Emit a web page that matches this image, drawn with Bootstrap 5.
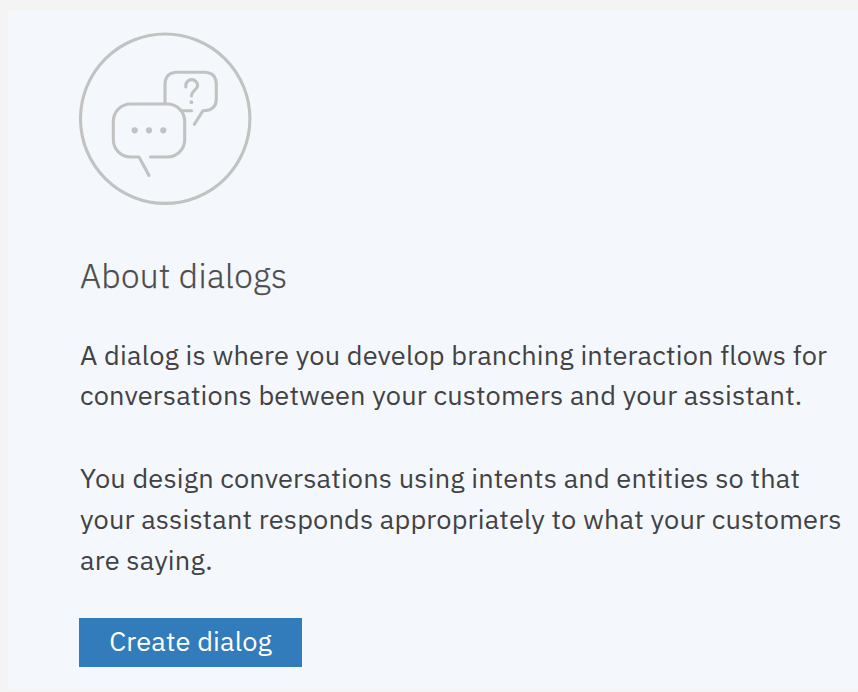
<!DOCTYPE html>
<html lang="en">
<head>
<meta charset="utf-8">
<meta name="viewport" content="width=device-width, initial-scale=1">
<title>About dialogs</title>
<link href="https://cdn.jsdelivr.net/npm/bootstrap@5.3.0/dist/css/bootstrap.min.css" rel="stylesheet">
<style>
body{background:#f4f4f4;font-family:"IBM Plex Sans","Open Sans",sans-serif;color:#424244;height:692px;overflow:hidden;padding:11px 0 3px 8px}
.panel{background:#f4f7fc;padding:21px 0 0 71px}
.dialog-icon{width:174px;height:174px}
.title{font-size:33.6px;line-height:44px;font-weight:300;margin:48px 0 0 1px;color:#4c4c4c;letter-spacing:.33px;-webkit-text-stroke:.25px #4c4c4c}
.copy{font-size:27.2px;white-space:nowrap;letter-spacing:.14px;margin-left:1px}
.copy span{display:block;width:max-content}
.copy-a{line-height:39.5px;margin-top:37px}
.copy-b{line-height:41.4px;margin-top:42.6px}
.btn-create{--bs-btn-color:#fff;--bs-btn-bg:#327cbb;width:223.4px;height:49px;margin-top:37px;font-size:27.2px;line-height:45px;letter-spacing:.14px}
</style>
</head>
<body>
<main class="panel h-100 d-flex flex-column align-items-start">
<svg class="dialog-icon flex-shrink-0" viewBox="0 0 174 174" fill="none" stroke="#c2c2c2" stroke-width="3.100" stroke-linecap="round" stroke-linejoin="round" aria-hidden="true">
<circle cx="86.2" cy="86.7" r="84.700"/>
<path d="M86 71V53Q86 40.300 98.500 40.300H125Q137.300 40.300 137.300 53V66.500Q137.300 78.700 124 78.700L115.300 92.300M102.500 78.700H112.500"/>
<path d="M71.500 125H88.500C98 125 105.700 117.300 105.700 107.500V89.500C105.700 79.700 98 72 88.500 72H51.500C42 72 34.300 79.700 34.300 89.500V107.500C34.300 117.300 42 125 51.500 125H60L70 143.500"/>
<path d="M106.800 55V53.500A5.900 5.900 0 0 1 118.600 53.500C118.600 58 112.500 58.500 112.500 64"/>
<g fill="#c2c2c2" stroke="none"><circle cx="112.400" cy="70.200" r="1.900"/><circle cx="55.700" cy="98.300" r="3.100"/><circle cx="70" cy="98.300" r="3.100"/><circle cx="84.300" cy="98.300" r="3.100"/></g>
</svg>
<h1 class="title mb-0">About dialogs</h1>
<p class="copy copy-a mb-0"><span>A dialog is where you develop branching interaction flows for</span> <span>conversations between your customers and your assistant.</span></p>
<p class="copy copy-b mb-0"><span>You design conversations using intents and entities so that</span> <span>your assistant responds appropriately to what your customers</span> <span>are saying.</span></p>
<button type="button" class="btn btn-create border-0 rounded-0 px-0 pt-0 pb-1">Create dialog</button>
</main>
<script src="https://cdn.jsdelivr.net/npm/bootstrap@5.3.0/dist/js/bootstrap.bundle.min.js"></script>
</body>
</html>
